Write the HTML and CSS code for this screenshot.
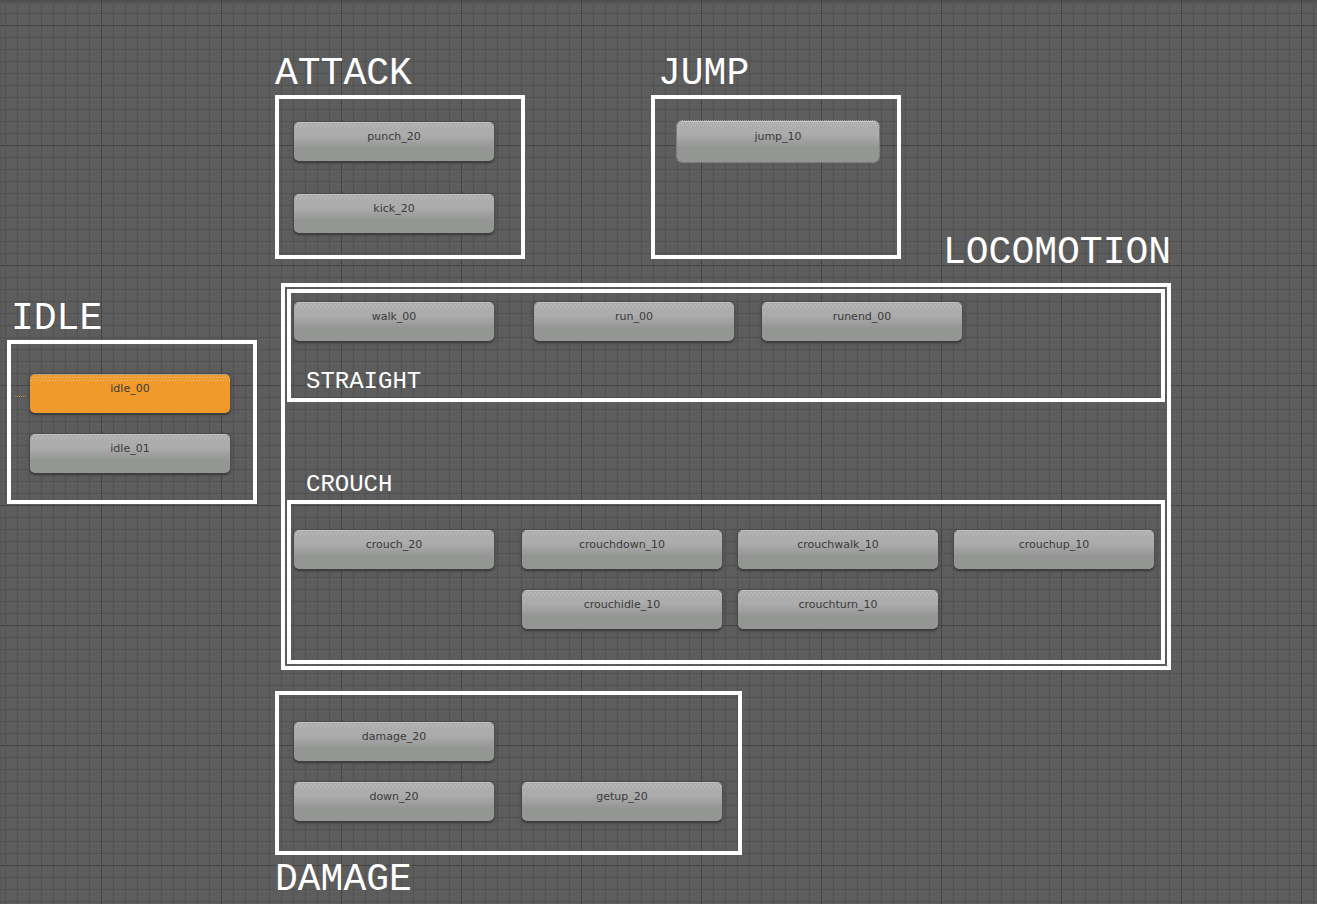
FILE: index.html
```
<!DOCTYPE html>
<html lang="en">
<head>
<meta charset="utf-8">
<title>Animator</title>
<link rel="stylesheet" href="styles.css">
</head>
<body>
<main class="canvas">
  <svg class="grid" aria-hidden="true">
    <defs>
      <pattern id="minor" x="5" y="1" width="12" height="12" patternUnits="userSpaceOnUse">
        <path class="minor-line" d="M0 .5H12M.5 0V12"/>
      </pattern>
      <pattern id="major" x="101" y="25" width="120" height="120" patternUnits="userSpaceOnUse">
        <path class="major-line" d="M0 .5H120M.5 0V120"/>
      </pattern>
    </defs>
    <rect width="100%" height="100%" fill="url(#minor)"/>
    <rect width="100%" height="100%" fill="url(#major)"/>
  </svg>

  <h2 class="title title-attack">ATTACK</h2>
  <section class="group group-attack" aria-label="Attack">
    <button class="node punch-20">punch_20</button>
    <button class="node kick-20">kick_20</button>
  </section>

  <h2 class="title title-jump">JUMP</h2>
  <section class="group group-jump" aria-label="Jump">
    <button class="node selected jump-10">jump_10</button>
  </section>

  <h2 class="title title-idle">IDLE</h2>
  <section class="group group-idle" aria-label="Idle">
    <span class="link"></span>
    <button class="node default idle-00">idle_00</button>
    <button class="node idle-01">idle_01</button>
  </section>

  <h2 class="title title-locomotion">LOCOMOTION</h2>
  <section class="group group-locomotion" aria-label="Locomotion">
    <section class="group group-straight" aria-label="Straight">
      <button class="node walk-00">walk_00</button>
      <button class="node run-00">run_00</button>
      <button class="node runend-00">runend_00</button>
      <h3 class="subtitle title-straight">STRAIGHT</h3>
    </section>
    <h3 class="subtitle title-crouch">CROUCH</h3>
    <section class="group group-crouch" aria-label="Crouch">
      <button class="node crouch-20">crouch_20</button>
      <button class="node crouchdown-10">crouchdown_10</button>
      <button class="node crouchwalk-10">crouchwalk_10</button>
      <button class="node crouchup-10">crouchup_10</button>
      <button class="node crouchidle-10">crouchidle_10</button>
      <button class="node crouchturn-10">crouchturn_10</button>
    </section>
  </section>

  <section class="group group-damage" aria-label="Damage">
    <button class="node damage-20">damage_20</button>
    <button class="node down-20">down_20</button>
    <button class="node getup-20">getup_20</button>
  </section>
  <h2 class="title title-damage">DAMAGE</h2>
</main>
</body>
</html>
```

FILE: styles.css
```
* {
  box-sizing: border-box;
}

body {
  margin: 0;
  background: #5d5d5d;
}

.canvas {
  position: relative;
  min-height: 100vh;
  overflow: hidden;
  background: #5d5d5d;
  box-shadow: inset 0 3px 2px #505050;
}

.grid {
  position: absolute;
  inset: 0;
  width: 100%;
  height: 100%;
}

.minor-line {
  stroke: #515151;
}

.major-line {
  stroke: #424242;
  stroke-dasharray: 4 1;
}

/* Titles */
.title,
.subtitle {
  position: absolute;
  margin: 0;
  color: #fff;
  font-family: "Liberation Mono", monospace;
  font-weight: 400;
  white-space: nowrap;
}

.title {
  font-size: 38px;
  line-height: 40px;
}

.subtitle {
  font-size: 24px;
  line-height: 26px;
}

.title-attack { left: 275px; top: 54px; }
.title-jump { left: 658px; top: 54px; }
.title-idle { left: 11px; top: 299px; }
.title-locomotion { left: 943px; top: 233px; }
.title-damage { left: 275px; top: 860px; }
.title-straight { left: 15px; top: 76px; }
.title-crouch { left: 21px; top: 185px; }

/* Group frames */
.group {
  position: absolute;
  width: 250px;
  height: 164px;
  border: 4px solid #fff;
}

.group-attack { left: 275px; top: 95px; }
.group-jump { left: 651px; top: 95px; }
.group-idle { left: 7px; top: 340px; }
.group-locomotion { left: 281px; top: 283px; width: 890px; height: 387px; }
.group-straight { left: 2px; top: 2px; width: 878px; height: 113px; }
.group-crouch { left: 2px; top: 213px; width: 878px; }
.group-damage { left: 275px; top: 691px; width: 467px; }

/* State nodes */
.node {
  position: absolute;
  display: flex;
  justify-content: center;
  align-items: flex-start;
  width: 200px;
  height: 39px;
  padding: 8px 0 0;
  border: 0;
  border-radius: 5px;
  background:
    linear-gradient(90deg, #c8c8c8 1px, transparent 1px) 0 2px / 4px 1px repeat-x,
    linear-gradient(90deg, #c8c8c8 1px, transparent 1px) 2px 4px / 4px 1px repeat-x,
    linear-gradient(#c0c0c0 1px, #adadad 1px, #acacac 13px, #949694 26px);
  box-shadow: 0 2px 1px #3e3e3e, 0 1px 4px #424242;
  color: #3a3a3a;
  font-family: "DejaVu Sans", sans-serif;
  font-size: 11px;
  line-height: 14px;
}

.default {
  background:
    linear-gradient(90deg, #d6c6aa 1px, transparent 1px) 0 3px / 3px 1px repeat-x,
    linear-gradient(90deg, #d6c6aa 1px, transparent 1px) 1px 6px / 3px 1px repeat-x,
    linear-gradient(#b5a286 1px, #f09a2c 1px);
}

.selected {
  box-shadow: inset 0 1px #ccc;
  outline: 1px dotted #a0a0a0;
}

.link {
  position: absolute;
  left: 4px;
  top: 52px;
  width: 12px;
  height: 1px;
  background: repeating-linear-gradient(90deg, #d6943c 0 1px, transparent 1px 2px);
}

.punch-20 { left: 15px; top: 23px; }
.kick-20 { left: 15px; top: 95px; }
.jump-10 { left: 22px; top: 22px; width: 202px; height: 41px; padding-top: 9px; }
.idle-00 { left: 19px; top: 30px; }
.idle-01 { left: 19px; top: 90px; }
.walk-00 { left: 3px; top: 9px; }
.run-00 { left: 243px; top: 9px; }
.runend-00 { left: 471px; top: 9px; }
.crouch-20 { left: 3px; top: 26px; }
.crouchdown-10 { left: 231px; top: 26px; }
.crouchwalk-10 { left: 447px; top: 26px; }
.crouchup-10 { left: 663px; top: 26px; }
.crouchidle-10 { left: 231px; top: 86px; }
.crouchturn-10 { left: 447px; top: 86px; }
.damage-20 { left: 15px; top: 27px; }
.down-20 { left: 15px; top: 87px; }
.getup-20 { left: 243px; top: 87px; }
```
